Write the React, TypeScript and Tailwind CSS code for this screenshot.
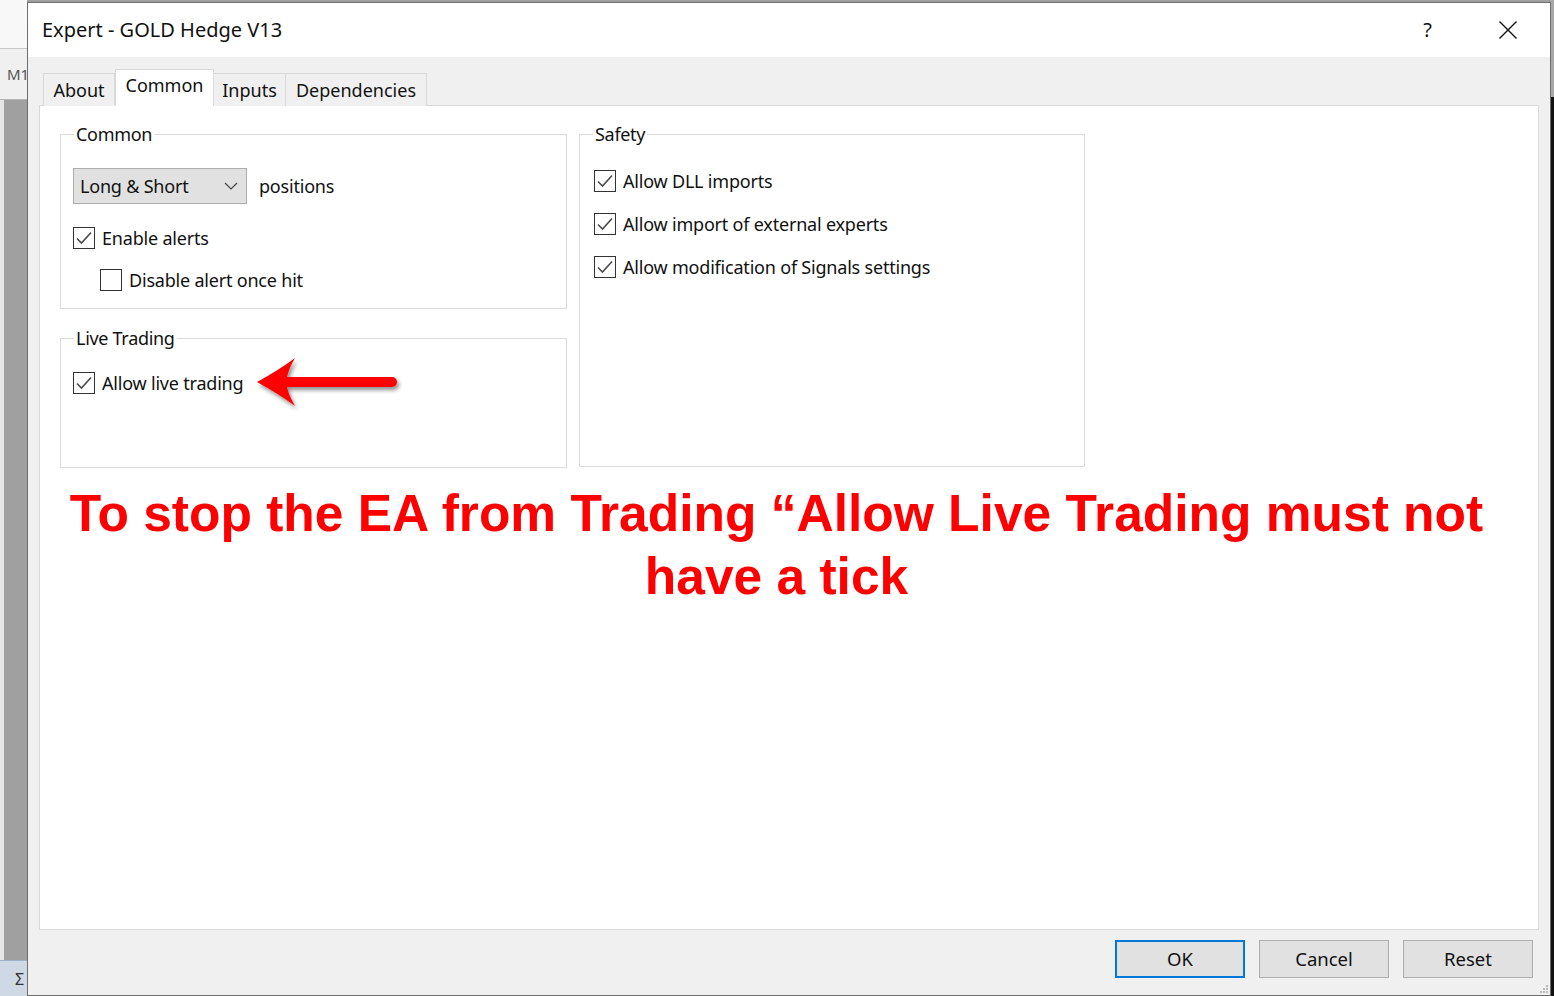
import { useState } from 'react';

const ui = "font-['Noto_Sans',sans-serif]";

function CheckBox({ checked, label }: { checked: boolean; label: string }) {
  return (
    <div className="flex items-center h-[28px]">
      <div className="w-[22px] h-[22px] border border-[#333333] bg-white flex items-center justify-center shrink-0">
        {checked && (
          <svg width="20" height="20" viewBox="0 0 20 20">
            <path d="M3 10.5 L7.5 15 L17 4.5" fill="none" stroke="#4a4a4a" strokeWidth="1.6" />
          </svg>
        )}
      </div>
      <span className="ml-[7px] text-[18px] tracking-[-0.2px] text-[#111] whitespace-nowrap">{label}</span>
    </div>
  );
}

function GroupBox({
  title,
  className,
  legendClass,
  children,
}: {
  title: string;
  className: string;
  legendClass: string;
  children: React.ReactNode;
}) {
  return (
    <fieldset className={`border border-[#dcdcdc] ${className}`}>
      <legend className={`px-[2px] text-[18px] tracking-[-0.3px] leading-[26px] text-[#111] ${legendClass}`}>{title}</legend>
      {children}
    </fieldset>
  );
}

function RedArrow() {
  return (
    <svg width="150" height="56" viewBox="0 0 150 56" className="ml-[10px] -my-[14px] -mt-[12px]">
      <defs>
        <filter id="sh" x="-10%" y="-20%" width="130%" height="160%">
          <feDropShadow dx="2" dy="3" stdDeviation="2" floodColor="#000" floodOpacity="0.45" />
        </filter>
      </defs>
      <g filter="url(#sh)">
        <path
          d="M4 26 Q26 14 42 2 Q36 12 34 21 L139 21 A5 5 0 0 1 139 31 L34 31 Q36 40 42 50 Q26 38 4 26 Z"
          fill="#ff0000"
        />
      </g>
    </svg>
  );
}

function WinButton({ label, focused }: { label: string; focused?: boolean }) {
  return (
    <button
      className={`w-[130px] h-[38px] bg-[#e1e1e1] text-[18.5px] text-[#111] ${
        focused ? 'border-2 border-[#0078d7]' : 'border border-[#adadad]'
      }`}
    >
      {label}
    </button>
  );
}

export default function App() {
  const [tab, setTab] = useState('Common');
  const tabs = [
    { id: 'About', w: 'w-[72px]' },
    { id: 'Common', w: 'w-[99px]' },
    { id: 'Inputs', w: 'w-[73px]' },
    { id: 'Dependencies', w: 'w-[142px]' },
  ];

  return (
    <div className={`w-[1554px] h-[996px] flex bg-[#a0a0a0] overflow-hidden ${ui}`}>
      {/* terminal behind the dialog, left edge */}
      <div className="w-[27px] flex flex-col shrink-0">
        <div className="h-[48px] bg-[#f8f8f8]" />
        <div className="h-[52px] bg-[#f0f0f0] border-t border-[#c8c8c8] border-b border-b-[#b5b5b5] flex items-center pl-[7px] text-[15px] text-[#555]">
          M1
        </div>
        <div className="flex-1 flex">
          <div className="w-[4px] bg-[#e6e6e6]" />
          <div className="flex-1 bg-[#a0a0a0]" />
        </div>
        <div className="h-[36px] bg-[#cfd9e6] border-t border-[#9fb2c9] flex items-center pl-[15px] text-[16px] text-[#333]">
          Σ
        </div>
      </div>

      {/* dialog */}
      <div className="w-[1524px] mt-[2px] flex flex-col border border-[#6e6e6e] bg-[#f0f0f0] shrink-0">
        {/* title bar */}
        <div className="h-[54px] bg-white flex items-center pl-[14px] shrink-0">
          <span className="text-[20px] text-[#111]">Expert - GOLD Hedge V13</span>
          <span className="ml-auto text-[20px] text-[#111] mr-[66px]">?</span>
          <svg width="20" height="20" viewBox="0 0 20 20" className="mr-[32px]">
            <path d="M1.5 1.5 L18.5 18.5 M18.5 1.5 L1.5 18.5" stroke="#111" strokeWidth="1.4" />
          </svg>
        </div>

        {/* body */}
        <div className="flex-1 flex flex-col px-[11px] pt-[12px]">
          {/* tabs */}
          <div className="flex items-end h-[37px] pl-[4px] relative z-10 -mb-px">
            {tabs.map((t, i) =>
              t.id === tab ? (
                <button
                  key={t.id}
                  onClick={() => setTab(t.id)}
                  className={`h-[37px] ${t.w} bg-white border border-[#d9d9d9] border-b-white text-[18px] text-[#111] pb-[5px]`}
                >
                  {t.id}
                </button>
              ) : (
                <button
                  key={t.id}
                  onClick={() => setTab(t.id)}
                  className={`h-[33px] ${t.w} bg-[#f0f0f0] border border-[#d9d9d9] border-b-0 ${i > 0 ? '-ml-px' : ''} text-[18px] text-[#111] pt-[1px]`}
                >
                  {t.id}
                </button>
              )
            )}
          </div>

          {/* tab panel */}
          <div className="h-[825px] bg-white border border-[#d9d9d9] flex flex-col pl-[20px] pt-[15px]">
            <div className="flex gap-[12px] items-start">
              <div className="flex flex-col w-[507px]">
                <GroupBox title="Common" className="h-[188px] px-[12px]" legendClass="ml-[1px]">
                  <div className="flex items-center mt-[21px]">
                    <div className="w-[174px] h-[36px] bg-[#e1e1e1] border border-[#adadad] flex items-center pl-[6px] pr-[8px] text-[18px] tracking-[-0.2px] text-[#111]">
                      <span>Long &amp; Short</span>
                      <svg width="14" height="8" viewBox="0 0 14 8" className="ml-auto">
                        <path d="M1 1 L7 7 L13 1" fill="none" stroke="#444" strokeWidth="1.2" />
                      </svg>
                    </div>
                    <span className="ml-[12px] text-[18px] tracking-[-0.2px] text-[#111]">positions</span>
                  </div>
                  <div className="mt-[20px]">
                    <CheckBox checked label="Enable alerts" />
                  </div>
                  <div className="mt-[14px] ml-[27px]">
                    <CheckBox checked={false} label="Disable alert once hit" />
                  </div>
                </GroupBox>
                <GroupBox title="Live Trading" className="h-[143px] mt-[16px] px-[12px]" legendClass="ml-[1px]">
                  <div className="mt-[18px] flex items-center h-[28px]">
                    <CheckBox checked label="Allow live trading" />
                    <RedArrow />
                  </div>
                </GroupBox>
              </div>
              <GroupBox title="Safety" className="w-[506px] h-[346px] px-[14px]" legendClass="-ml-[1px]">
                <div className="mt-[20px] flex flex-col gap-[15px]">
                  <CheckBox checked label="Allow DLL imports" />
                  <CheckBox checked label="Allow import of external experts" />
                  <CheckBox checked label="Allow modification of Signals settings" />
                </div>
              </GroupBox>
            </div>

            <div className="mt-[14px] pr-[45px] text-center text-[#ff0000] font-['Liberation_Sans',Arial,sans-serif] font-bold text-[51.5px] leading-[63px]">
              <div className="whitespace-nowrap">To stop the EA from Trading “Allow Live Trading must not</div>
              <div className="whitespace-nowrap">have a tick</div>
            </div>
          </div>

          {/* footer buttons */}
          <div className="flex justify-end gap-[14px] mt-[10px] pr-[6px]">
            <WinButton label="OK" focused />
            <WinButton label="Cancel" />
            <WinButton label="Reset" />
          </div>
          <div className="flex justify-end mt-auto -mr-[10px] mb-[1px]">
            <svg width="10" height="10" viewBox="0 0 10 10">
              <rect x="7" y="1" width="2" height="2" fill="#b8b8b8" />
              <rect x="4" y="4" width="2" height="2" fill="#b8b8b8" />
              <rect x="7" y="4" width="2" height="2" fill="#b8b8b8" />
              <rect x="1" y="7" width="2" height="2" fill="#b8b8b8" />
              <rect x="4" y="7" width="2" height="2" fill="#b8b8b8" />
              <rect x="7" y="7" width="2" height="2" fill="#b8b8b8" />
            </svg>
          </div>
        </div>
      </div>

      {/* chart edge on the right */}
      <div className="flex-1 flex flex-col">
        <div className="h-[97px] bg-[#a8a8a8]" />
        <div className="flex-1 bg-[#111]" />
      </div>
    </div>
  );
}
